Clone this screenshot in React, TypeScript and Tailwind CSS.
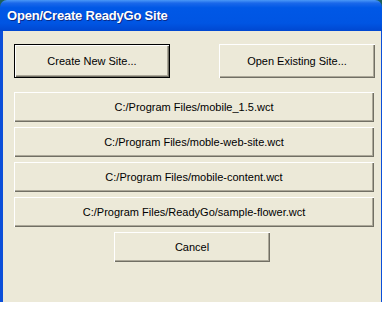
const btn =
  'flex items-center justify-center bg-[#ece9d8] text-[11px] text-black shadow-[inset_1px_1px_0_#ffffff,inset_-1px_-1px_0_#716f64,inset_-2px_-2px_0_#aca899]'

const recent = [
  'C:/Program Files/mobile_1.5.wct',
  'C:/Program Files/moble-web-site.wct',
  'C:/Program Files/mobile-content.wct',
  'C:/Program Files/ReadyGo/sample-flower.wct',
]

export default function App() {
  return (
    <div className="flex h-[336px] w-[382px] flex-col overflow-hidden bg-white font-['Liberation_Sans',Arial,sans-serif]">
      <div className="shrink-0 bg-[#1d5f5a]">
        <div className="flex h-[31px] items-center rounded-t-[7px] bg-[linear-gradient(180deg,#4a98f7_0%,#1a68ea_10%,#0058e6_25%,#0055e3_75%,#0047d0_100%)] pl-[7px] pt-[1px]">
          <span className="text-[13px] font-bold tracking-[-0.2px] text-white [text-shadow:1px_1px_0_#0a2a88]">
            Open/Create ReadyGo Site
          </span>
        </div>
      </div>
      <div className="flex h-[271px] shrink-0">
        <div className="w-[3px] bg-[#0b4fd9]" />
        <div className="flex flex-1 flex-col bg-[#ece9d8] pl-[11px] pr-[6px] pt-[13px]">
          <div className="flex justify-between">
            <div className={`${btn} h-[34px] w-[156px] border border-black`}>
              Create New Site...
            </div>
            <div className={`${btn} h-[34px] w-[156px]`}>Open Existing Site...</div>
          </div>
          <div className="mt-[14px] flex flex-col gap-[5px]">
            {recent.map((p) => (
              <div key={p} className={`${btn} h-[30px] w-[360px]`}>
                {p}
              </div>
            ))}
            <div className={`${btn} ml-[100px] h-[30px] w-[156px]`}>Cancel</div>
          </div>
        </div>
        <div className="w-px bg-[#0b4fd9]" />
      </div>
    </div>
  )
}
